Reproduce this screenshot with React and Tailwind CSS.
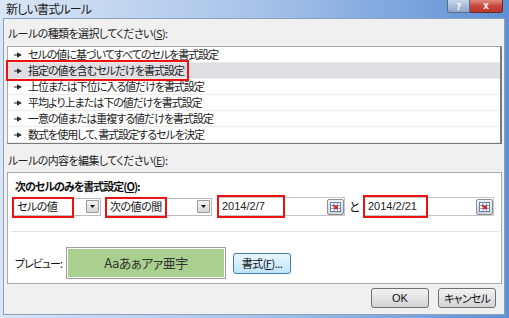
import React from "react";

// Excel "new formatting rule" dialog (Windows 7 style)
const rules = [
  "セルの値に基づいてすべてのセルを書式設定",
  "指定の値を含むセルだけを書式設定",
  "上位または下位に入る値だけを書式設定",
  "平均より上または下の値だけを書式設定",
  "一意の値または重複する値だけを書式設定",
  "数式を使用して、書式設定するセルを決定",
];

const Arrow = () => (
  <svg width="8" height="6" viewBox="0 0 8 6" className="shrink-0">
    <path d="M0 2.4h3.5v1.2H0z M3 0.2l5 2.8L3 5.8z" fill="#2b2b2b" />
  </svg>
);

const RedBox = ({ className }) => (
  <div className={"absolute border-2 border-[#ee1111] pointer-events-none " + className} />
);

const DropButton = () => (
  <div className="w-[13px] h-[13px] border border-[#9a9a9a] rounded-[1px] bg-gradient-to-b from-[#f4f4f4] to-[#d6d6d6] flex items-center justify-center">
    <svg width="5" height="3" viewBox="0 0 5 3">
      <path d="M0 0h5L2.5 3z" fill="#111" />
    </svg>
  </div>
);

const RefButton = () => (
  <div className="w-[17px] h-[16px] border border-[#8e8f8f] rounded-[2px] bg-gradient-to-b from-[#f3f3f3] to-[#d2d2d2] flex items-center justify-center">
    <svg width="11" height="10" viewBox="0 0 11 10">
      <rect x="0.5" y="0.5" width="10" height="9" fill="#ffffff" stroke="#5b7fb5" />
      <path d="M0.5 3.5h10M0.5 6.5h10M4 0.5v9M7.5 0.5v9" stroke="#7e9fcf" strokeWidth="1" />
      <path d="M3 3l4 3M7 3.5v3H4" stroke="#e02020" strokeWidth="1.6" fill="none" />
    </svg>
  </div>
);

const Combo = ({ text, width }) => (
  <div className={"h-[18px] bg-white border border-[#b9bcc2] flex items-center justify-between pl-[3px] pr-[1px] " + width}>
    <span className="text-[11px] leading-none tracking-[-0.5px]">{text}</span>
    <DropButton />
  </div>
);

const DateField = ({ text, width }) => (
  <div className={"h-[19px] bg-white border border-[#c4c6ca] flex items-center justify-between pl-[3px] " + width}>
    <span className="text-[11px] leading-none font-['Liberation_Sans',sans-serif] text-[#222]">{text}</span>
    <RefButton />
  </div>
);

const WinButton = ({ children, className }) => (
  <div
    className={
      "h-[20px] w-[58px] rounded-[3px] border flex items-center justify-center text-[11px] " + className
    }
  >
    {children}
  </div>
);

export default function App() {
  return (
    <div className="w-[509px] h-[318px] overflow-hidden flex flex-col bg-gradient-to-r from-[#dae6f5] via-[#a8c3e8] to-[#5f8fd5] font-['Noto_Sans_CJK_JP',sans-serif] [font-feature-settings:'palt'] text-[#111]">
      {/* title bar */}
      <div className="h-[18px] flex items-start justify-between shrink-0">
        <span className="pl-[6px] pt-[1px] text-[12px] leading-[15px] tracking-[-0.8px] text-[#1a1a1a]">新しい書式ルール</span>
        <div className="flex mr-[6px]">
          <div className="w-[23px] h-[13px] rounded-bl-[3px] border border-t-0 border-[#5a6e8c] bg-gradient-to-b from-[#c8d6ea] to-[#8ea6c8] flex items-center justify-center text-[9px] font-bold leading-none text-white">
            ?
          </div>
          <div className="w-[33px] h-[13px] rounded-br-[3px] border border-t-0 border-l-0 border-[#6b2b26] bg-gradient-to-b from-[#e08b80] via-[#c7463a] to-[#b8392e] flex items-center justify-center text-[10px] font-bold leading-none text-white font-['Liberation_Sans',sans-serif]">
            x
          </div>
        </div>
      </div>

      {/* body */}
      <div className="ml-[3px] w-[502px] h-[297px] bg-[#f0f0f0] border border-[#8aa2c2] flex flex-col pt-[7px] text-[11px]">
        <div className="pl-[4px] leading-[14px] tracking-[-0.6px] text-[#222]">
          ルールの種類を選択してください(<span className="underline">S</span>):
        </div>

        {/* rule list */}
        <div className="relative ml-[3px] mt-[6px] w-[495px] h-[98px] bg-white border border-[#aaaaaa] border-r-2 border-b-2 border-r-[#7a7a7a] border-b-[#7a7a7a]">
          {rules.map((r, i) => (
            <div
              key={r}
              className={
                "h-[16px] flex items-center gap-[6px] pl-[6px] border-b border-[#ececec] " +
                (i === 1 ? "bg-[#dedee3]" : "")
              }
            >
              <Arrow />
              <span className="leading-none tracking-[-1px] text-[#222]">{r}</span>
            </div>
          ))}
          <RedBox className="left-[-2px] top-[13px] w-[183px] h-[21px]" />
        </div>

        <div className="pl-[4px] mt-[9px] leading-[14px] tracking-[-0.6px] text-[#222]">
          ルールの内容を編集してください(<span className="underline">E</span>):
        </div>

        {/* rule editor */}
        <div className="ml-[3px] mt-[5px] w-[495px] h-[112px] bg-white border border-[#aaaaaa] flex flex-col pt-[6px]">
          <div className="pl-[7px] leading-[14px] font-bold tracking-[-1px]">
            次のセルのみを書式設定(<span className="underline">O</span>):
          </div>
          <div className="flex items-center pl-[5px] mt-[4px]">
            <div className="relative">
              <Combo text="セルの値" width="w-[88px]" />
              <RedBox className="left-[-1px] top-[-1px] w-[62px] h-[21px]" />
            </div>
            <div className="relative ml-[5px]">
              <Combo text="次の値の間" width="w-[106px]" />
              <RedBox className="left-[-1px] top-[-1px] w-[62px] h-[21px]" />
            </div>
            <div className="relative ml-[6px]">
              <DateField text="2014/2/7" width="w-[127px]" />
              <RedBox className="left-[-1px] top-[-2px] w-[68px] h-[23px]" />
            </div>
            <span className="w-[19px] text-center text-[12px] leading-none">と</span>
            <div className="relative">
              <DateField text="2014/2/21" width="w-[130px]" />
              <RedBox className="left-[-1px] top-[-2px] w-[65px] h-[23px]" />
            </div>
          </div>
          <div className="ml-[3px] mr-[2px] mt-[15px] h-px bg-[#e2e2e2]" />
          <div className="flex items-center pl-[7px] mt-[15px]">
            <span className="w-[51px] leading-none tracking-[-1px]">プレビュー:</span>
            <div className="w-[160px] h-[32px] border border-[#9c9c9c] bg-[#a9d08e] flex items-center justify-center text-[13px] text-[#333] tracking-[-0.5px] shadow-[inset_0_0_0_1px_#ffffff]">
              Aaあぁアァ亜宇
            </div>
            <WinButton className="ml-[7px] w-[58px] h-[21px] border-[#3c7fb1] bg-gradient-to-b from-[#eaf6fd] to-[#bee6fd] tracking-[-0.5px]">
              書式(<span className="underline">F</span>)...
            </WinButton>
          </div>
        </div>

        {/* footer buttons */}
        <div className="flex justify-end gap-[9px] mr-[8px] mt-[4px]">
          <WinButton className="border-[#707070] bg-gradient-to-b from-[#f2f2f2] to-[#d4d4d4] font-['Liberation_Sans',sans-serif]">
            OK
          </WinButton>
          <WinButton className="border-[#707070] bg-gradient-to-b from-[#f2f2f2] to-[#d4d4d4] tracking-[-0.8px]">
            キャンセル
          </WinButton>
        </div>
      </div>
    </div>
  );
}
